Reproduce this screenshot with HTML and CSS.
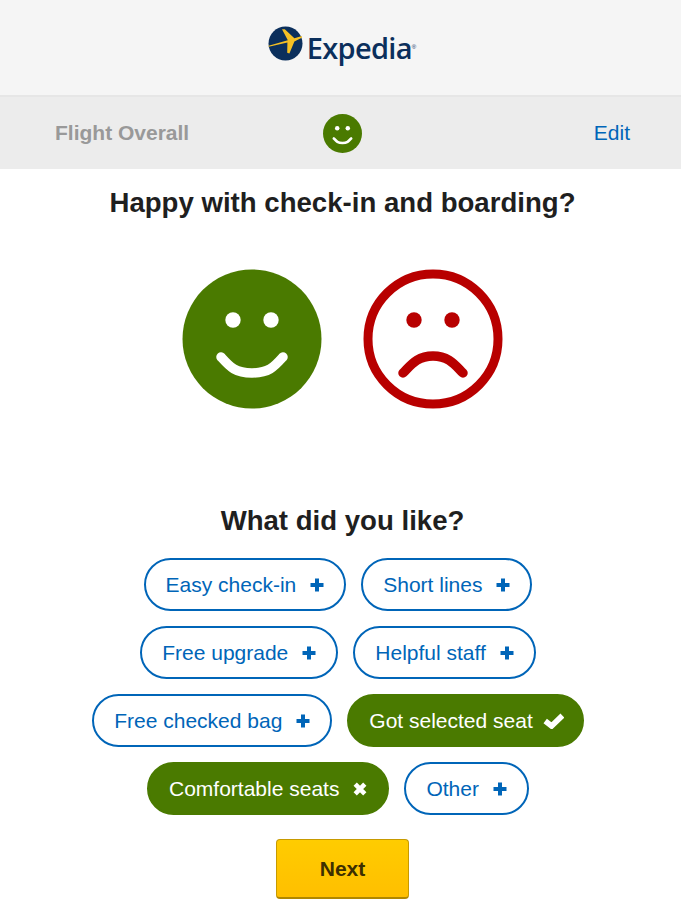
FILE: index.html
```html
<!DOCTYPE html>
<html lang="en">
<head>
<meta charset="utf-8">
<title>Expedia survey</title>
<link rel="stylesheet" href="styles.css">
</head>
<body>
<header class="brand">
  <div class="logo">
    <svg class="logo-globe" viewBox="0 0 36 36" aria-hidden="true">
      <circle cx="17.5" cy="17.5" r="17" fill="#0b2f5c"/>
      <path fill="#f5c024" d="M0.6 19.8 L19.8 14.2 L14 3.2 L16.8 3.2 L26.4 12.2 L33.9 10 L33.8 11.8 L26.4 15.4 L21.4 27.4 L19.2 26.8 L19.4 16.6 L0.8 20.8 Z"/>
    </svg>
    <span class="logo-word">Expedia</span>
    <span class="logo-reg">®</span>
  </div>
</header>

<section class="summary">
  <span class="summary-label">Flight Overall</span>
  <svg class="summary-face" viewBox="-70 -70 140 140" aria-hidden="true">
    <circle r="70" fill="#4a7a00"/>
    <circle cx="-19" cy="-19" r="8" fill="#fff"/>
    <circle cx="19" cy="-19" r="8" fill="#fff"/>
    <path class="smile" d="M-31 18 C-22 28 -17 34 0 34 C17 34 22 28 31 18"/>
  </svg>
  <a class="summary-edit" href="#">Edit</a>
</section>

<main class="survey">
  <h1 class="question">Happy with check-in and boarding?</h1>
  <div class="faces">
    <svg class="face" viewBox="-70 -70 140 140" aria-hidden="true">
      <circle r="69.5" fill="#4a7a00"/>
      <circle cx="-19" cy="-19" r="7.7" fill="#fff"/>
      <circle cx="19" cy="-19" r="7.7" fill="#fff"/>
      <path class="smile" d="M-31 18 C-22 28 -17 34 0 34 C17 34 22 28 31 18"/>
    </svg>
    <svg class="face" viewBox="-70 -70 140 140" aria-hidden="true">
      <circle r="65" fill="none" stroke="#b80000" stroke-width="9"/>
      <circle cx="-19" cy="-19" r="7.7" fill="#b80000"/>
      <circle cx="19" cy="-19" r="7.7" fill="#b80000"/>
      <path class="frown" d="M-30 34 C-22 26 -16 17 0 17 C16 17 22 26 30 34"/>
    </svg>
  </div>

  <h2 class="question question-like">What did you like?</h2>
  <div class="chips">
    <button class="chip">Easy check-in <svg class="chip-icon" viewBox="0 0 14 14"><path class="plus" d="M7 0.5V13.5M0.5 7H13.5"/></svg></button>
    <button class="chip">Short lines <svg class="chip-icon" viewBox="0 0 14 14"><path class="plus" d="M7 0.5V13.5M0.5 7H13.5"/></svg></button>
    <button class="chip">Free upgrade <svg class="chip-icon" viewBox="0 0 14 14"><path class="plus" d="M7 0.5V13.5M0.5 7H13.5"/></svg></button>
    <button class="chip">Helpful staff <svg class="chip-icon" viewBox="0 0 14 14"><path class="plus" d="M7 0.5V13.5M0.5 7H13.5"/></svg></button>
    <button class="chip">Free checked bag <svg class="chip-icon" viewBox="0 0 14 14"><path class="plus" d="M7 0.5V13.5M0.5 7H13.5"/></svg></button>
    <button class="chip chip-on">Got selected seat <svg class="chip-icon chip-check" viewBox="0 0 21 16"><path class="mark mark-check" d="M2.2 8L8.6 13L19.4 2.6"/></svg></button>
    <button class="chip chip-on">Comfortable seats <svg class="chip-icon" viewBox="0 0 14 14"><path class="mark" d="M2.2 2.2L11.8 11.8M11.8 2.2L2.2 11.8"/></svg></button>
    <button class="chip">Other <svg class="chip-icon" viewBox="0 0 14 14"><path class="plus" d="M7 0.5V13.5M0.5 7H13.5"/></svg></button>
  </div>
  <button class="next">Next</button>
</main>
</body>
</html>
```

FILE: styles.css
```css
* { box-sizing: border-box; }

html, body {
  margin: 0;
  padding: 0;
  background: #fff;
  font-family: "Liberation Sans", Arial, sans-serif;
  color: #1f1f1f;
}

.brand {
  height: 97px;
  background: #f5f5f5;
  border-bottom: 2px solid #e6e6e6;
  display: flex;
  align-items: flex-start;
  justify-content: center;
  padding-top: 26px;
}

.logo {
  display: flex;
  align-items: flex-start;
  margin-left: 3px;
}

.logo-globe {
  width: 36px;
  height: 36px;
  display: block;
}

.logo-word {
  font-family: "Open Sans", sans-serif;
  font-weight: 600;
  font-size: 29px;
  line-height: 44px;
  letter-spacing: -0.7px;
  color: #0b2f5c;
  margin-left: 3px;
}

.logo-reg {
  font-size: 6px;
  line-height: 6px;
  color: #0b2f5c;
  margin-top: 18px;
}

.summary {
  height: 72px;
  background: #ececec;
  display: grid;
  grid-template-columns: 1fr auto 1fr;
  align-items: center;
  padding: 0 51px 0 55px;
}

.summary-label {
  font-size: 21px;
  font-weight: 700;
  color: #999;
}

.summary-face {
  width: 39px;
  height: 39px;
  display: block;
}

.summary-edit {
  justify-self: end;
  font-size: 21px;
  color: #0065b8;
  text-decoration: none;
}

.smile, .frown {
  fill: none;
  stroke-width: 9.5;
  stroke-linecap: round;
}

.smile { stroke: #fff; }
.frown { stroke: #b80000; }

.survey {
  display: flex;
  flex-direction: column;
  align-items: center;
  padding-left: 4px;
}

.question {
  margin: 0;
  font-size: 27.6px;
  line-height: 34px;
  font-weight: 700;
  margin-top: 17px;
  color: #1f1f1f;
}

.faces {
  display: flex;
  gap: 41px;
  margin-top: 49px;
}

.face {
  width: 140px;
  height: 140px;
  display: block;
}

.question-like {
  margin-top: 95px;
}

.chips {
  width: 560px;
  display: flex;
  flex-wrap: wrap;
  justify-content: center;
  gap: 15px;
  margin: 20px 9px 0 0;
}

.chip {
  display: inline-flex;
  align-items: center;
  gap: 14px;
  height: 53px;
  padding: 0 20px;
  border: 2px solid #0065b8;
  border-radius: 27px;
  background: #fff;
  color: #0065b8;
  font-family: inherit;
  font-size: 21px;
  white-space: nowrap;
}

.chip-on {
  background: #4a7a00;
  border-color: #4a7a00;
  color: #fff;
}

.chip-icon {
  width: 14px;
  height: 14px;
  display: block;
  flex: none;
}

.chip-check {
  width: 21px;
  height: 16px;
  margin-left: -4px;
  margin-right: -2px;
}

.plus {
  fill: none;
  stroke: #0065b8;
  stroke-width: 4;
}

.mark {
  fill: none;
  stroke: #fff;
  stroke-width: 4.6;
}

.mark-check {
  stroke-width: 5.6;
}

.next {
  width: 133px;
  height: 60px;
  margin-top: 24px;
  border: 1px solid #c79a00;
  border-bottom: 2px solid #b08700;
  border-radius: 4px;
  background: linear-gradient(#ffcc00, #ffbf00);
  color: #3d2f00;
  font-family: inherit;
  font-size: 21px;
  font-weight: 700;
}
```
